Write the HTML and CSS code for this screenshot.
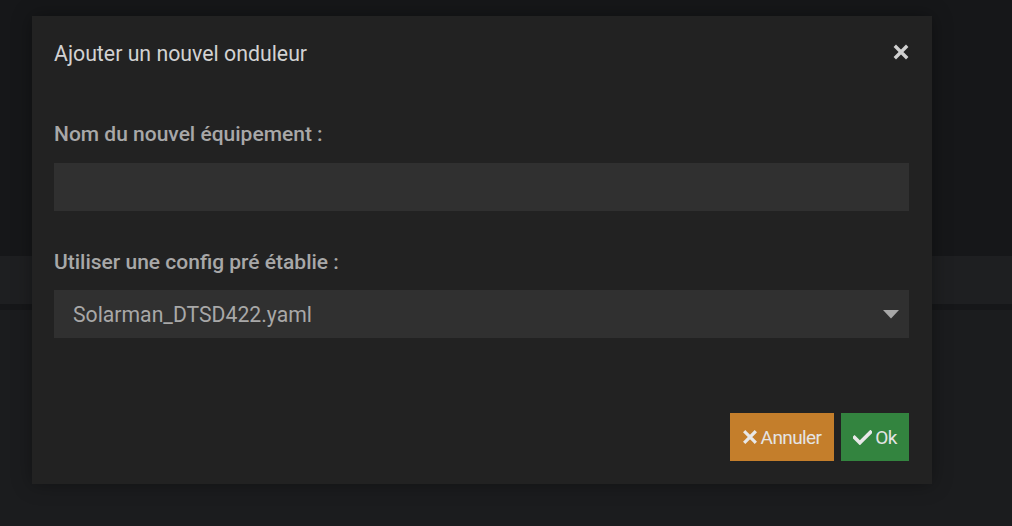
FILE: index.html
```html
<!DOCTYPE html>
<html lang="fr">
<head>
<meta charset="utf-8">
<title>Ajouter un nouvel onduleur</title>
<link rel="stylesheet" href="styles.css">
</head>
<body>
<div class="page">
  <div class="bg-top"></div>
  <div class="bg-band"></div>
  <div class="bg-line"></div>
  <div class="bg-bottom"></div>
</div>
<div class="modal">
  <div class="modal-header">
    <h4 class="modal-title">Ajouter un nouvel onduleur</h4>
    <button class="close" type="button" aria-label="Fermer">
      <svg width="16" height="16" viewBox="0 0 16 16"><path d="M3 3 L13 13 M13 3 L3 13" stroke="#d0d0d0" stroke-width="3.4" stroke-linecap="square"/></svg>
    </button>
  </div>
  <div class="modal-body">
    <label class="field-label">Nom du nouvel équipement :</label>
    <div class="input"></div>
    <label class="field-label second">Utiliser une config pré établie :</label>
    <div class="select">
      <span>Solarman_DTSD422.yaml</span>
      <svg class="caret" width="16" height="9" viewBox="0 0 16 9"><path d="M0 0 H16 L8 8.5 Z" fill="#a8a8a8"/></svg>
    </div>
  </div>
  <div class="modal-footer">
    <button class="btn btn-cancel" type="button">
      <svg width="14" height="14" viewBox="0 0 12 12"><path d="M2 2 L10 10 M10 2 L2 10" stroke="#e8e8e8" stroke-width="2.8" stroke-linecap="square"/></svg>
      Annuler
    </button>
    <button class="btn btn-ok" type="button">
      <svg width="19" height="15" viewBox="0 0 18 14"><path d="M1.5 7 L6.5 12 L16.5 2" stroke="#e8e8e8" stroke-width="3.4" fill="none" stroke-linecap="square"/></svg>
      Ok
    </button>
  </div>
</div>
</body>
</html>
```
FILE: styles.css
```css
html, body {
  margin: 0;
  padding: 0;
  height: 100%;
  background: #1b1c1e;
  font-family: Roboto, "Liberation Sans", sans-serif;
  overflow: hidden;
}
.page {
  display: flex;
  flex-direction: column;
  height: 100%;
}
.bg-top { height: 256px; background: #161719; }
.bg-band { height: 48px; background: #1e1f21; }
.bg-line { height: 6px; background: #161719; }
.bg-bottom { flex: 1; background: #1b1c1e; }

.modal {
  position: absolute;
  left: 32px;
  top: 16px;
  width: 900px;
  height: 468px;
  background: #222222;
  box-shadow: 0 0 18px rgba(0, 0, 0, 0.35);
  display: flex;
  flex-direction: column;
  box-sizing: border-box;
}
.modal-header {
  display: flex;
  align-items: center;
  justify-content: space-between;
  padding: 13px 23px 0 22px;
  height: 48px;
  box-sizing: content-box;
}
.modal-title {
  margin: 0;
  font-size: 21.3px;
  font-weight: 400;
  color: #d2d2d2;
}
.close {
  background: none;
  border: 0;
  padding: 0;
  width: 16px;
  height: 16px;
  display: flex;
  margin-top: -3px;
}
.modal-body {
  padding: 0 23px 0 22px;
  display: flex;
  flex-direction: column;
}
.field-label {
  display: block;
  font-size: 21px;
  font-weight: 500;
  color: #a8a8a8;
  margin-top: 45px;
  line-height: 24px;
}
.field-label.second { margin-top: 39px; }
.input, .select {
  margin-top: 17px;
  height: 48px;
  background: #303030;
}
.select {
  margin-top: 16px;
  display: flex;
  align-items: center;
  justify-content: space-between;
  padding: 0 10px 0 19px;
  font-size: 21.2px;
  color: #a8a8a8;
}
.caret { margin-top: 0; }
.modal-footer {
  display: flex;
  justify-content: flex-end;
  gap: 7px;
  padding: 75px 23px 0 0;
}
.btn {
  height: 48px;
  border: 0;
  display: flex;
  align-items: center;
  gap: 3px;
  font-family: Roboto, "Liberation Sans", sans-serif;
  font-size: 19px;
  letter-spacing: -0.6px;
  color: #e4e4e4;
  padding: 0;
  justify-content: center;
}
.btn-cancel { width: 104px; background: #c47e2b; gap: 4px; }
.btn-ok { width: 68px; background: #33843f; }
```
